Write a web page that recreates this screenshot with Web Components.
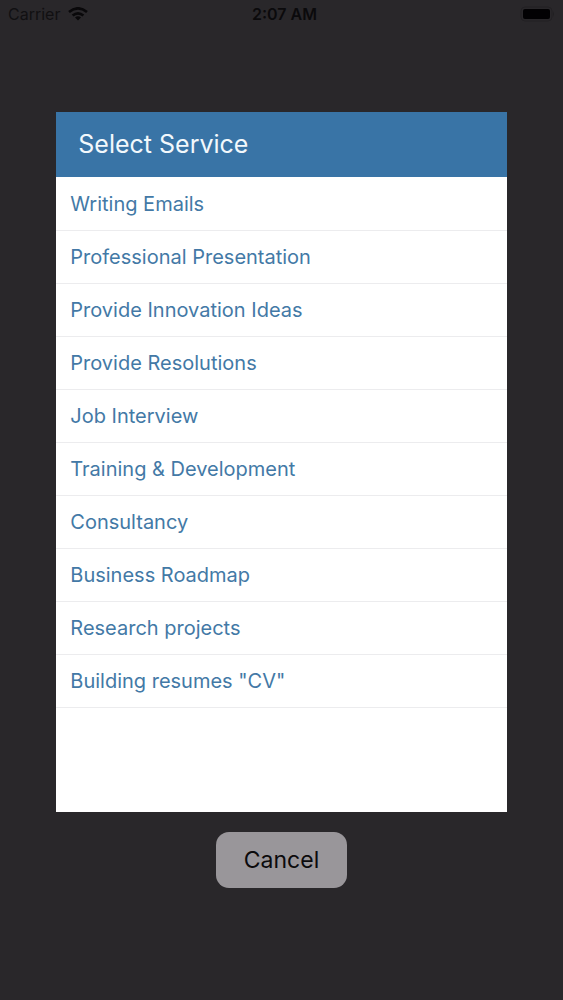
<!DOCTYPE html>
<html lang="en">
<head>
<meta charset="utf-8">
<meta name="viewport" content="width=device-width, initial-scale=1">
<title>Select Service</title>
<style>
  html, body { height: 100%; }
  body { margin: 0; background: #29272a; font-family: Inter, "Liberation Sans", sans-serif; }
</style>
</head>
<body>
<service-screen>
  <status-bar slot="status" carrier="Carrier" time="2:07 AM"></status-bar>
  <service-dialog heading="Select Service">
    <service-option>Writing Emails</service-option>
    <service-option>Professional Presentation</service-option>
    <service-option>Provide Innovation Ideas</service-option>
    <service-option>Provide Resolutions</service-option>
    <service-option>Job Interview</service-option>
    <service-option>Training &amp; Development</service-option>
    <service-option>Consultancy</service-option>
    <service-option>Business Roadmap</service-option>
    <service-option>Research projects</service-option>
    <service-option>Building resumes "CV"</service-option>
  </service-dialog>
  <cancel-button slot="action">Cancel</cancel-button>
</service-screen>

<script>
class BaseElement extends HTMLElement {
  constructor() {
    super();
    this.attachShadow({ mode: 'open' }).innerHTML = this.constructor.markup;
  }
}

customElements.define('service-screen', class extends BaseElement {
  static markup = `
    <style>
      :host { display: flex; flex-direction: column; min-height: 100vh; box-sizing: border-box; padding-bottom: 112px; }
      main { flex: 1; display: flex; flex-direction: column; align-items: center; gap: 20px; padding-top: 84px; }
      ::slotted(service-dialog) { flex: 1; width: 80%; }
    </style>
    <slot name="status"></slot>
    <main><slot></slot><slot name="action"></slot></main>`;
});

customElements.define('status-bar', class extends BaseElement {
  static markup = `
    <style>
      :host { display: grid; grid-template-columns: 1fr auto 1fr; align-items: center; height: 28px; padding: 0 8px; color: #0b0a0c; font-size: 16px; line-height: 20px; }
      .network { display: flex; align-items: center; gap: 8px; color: #111012; }
      .time { font-weight: 600; padding-left: 6px; }
      .battery { justify-self: end; }
      svg { display: block; }
    </style>
    <div class="network">
      <span class="carrier"></span>
      <svg width="20" height="14" viewBox="0 0 20 14" fill="none" stroke="#09080a" stroke-width="2.6" aria-label="Wi-Fi">
        <path d="M1 5Q10-2.4 19 5M4.6 8.6Q10 4 15.4 8.6"/>
        <path d="M7 10.6Q10 8 13 10.6L10 13.6Z" fill="#09080a" stroke="none"/>
      </svg>
    </div>
    <span class="time"></span>
    <svg class="battery" width="35" height="16" viewBox="0 0 35 16" aria-label="Battery full">
      <rect x="1" y="1" width="31" height="14" rx="4" fill="none" stroke="#222023"/>
      <rect x="3" y="3" width="27" height="10" rx="2" fill="#020103"/>
      <path d="M33 5.5Q35 8 33 10.5Z" fill="#222023"/>
    </svg>`;
  connectedCallback() {
    this.shadowRoot.querySelector('.carrier').textContent = this.getAttribute('carrier');
    this.shadowRoot.querySelector('.time').textContent = this.getAttribute('time');
  }
});

customElements.define('service-dialog', class extends BaseElement {
  static markup = `
    <style>
      :host { display: flex; flex-direction: column; background: #fff; }
      h1 { margin: 0; padding: 16px 22px; background: #3974a6; color: #f2f8fc; font-size: 25px; line-height: 33px; font-weight: 400; }
      section { padding-top: 1px; }
    </style>
    <h1></h1>
    <section><slot></slot></section>`;
  connectedCallback() {
    this.shadowRoot.querySelector('h1').textContent = this.getAttribute('heading');
  }
});

customElements.define('service-option', class extends BaseElement {
  static markup = `
    <style>
      :host { display: block; border-bottom: 1px solid #ececee; }
      button { display: block; width: 100%; border: 0; margin: 0; padding: 14px; background: none; color: #4379a6; font: inherit; font-size: 20px; line-height: 24px; text-align: left; cursor: pointer; }
    </style>
    <button type="button"><slot></slot></button>`;
});

customElements.define('cancel-button', class extends BaseElement {
  static markup = `
    <style>
      :host { display: block; }
      button { display: block; border: 0; margin: 0; padding: 12px 28px; border-radius: 13px; background: #99969a; color: #0b0a0c; font: inherit; font-size: 23px; line-height: 32px; cursor: pointer; }
    </style>
    <button type="button"><slot></slot></button>`;
});
</script>
</body>
</html>
